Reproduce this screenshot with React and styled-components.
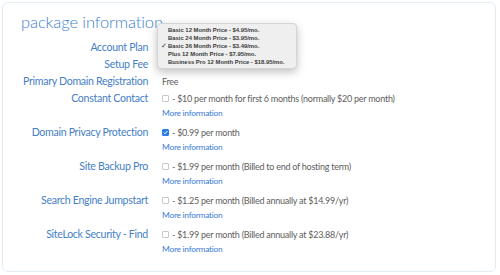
import React from "react";
import styled, { createGlobalStyle } from "styled-components";

const GlobalStyle = createGlobalStyle`
  body {
    margin: 0;
    background: #fff;
    font-family: "Lato", "Liberation Sans", sans-serif;
  }
`;

const Card = styled.div`
  margin: 2px 4px 0 2px;
  height: 270px;
  box-sizing: border-box;
  border: 1px solid #e3ebf4;
  border-radius: 6px;
  padding: 8px 0 0 19px;
`;

const Title = styled.h2`
  margin: 0 0 0 -1px;
  font-size: 16.5px;
  line-height: 22px;
  font-weight: 300;
  color: #3d7fd1;
  letter-spacing: -0.1px;
`;

const Form = styled.div`
  display: grid;
  grid-template-columns: 126px 1fr;
  column-gap: 14px;
  margin-top: 6px;
`;

const Label = styled.div`
  text-align: right;
  font-size: 10.6px;
  line-height: 17px;
  height: 17px;
  letter-spacing: -0.3px;
  color: #4580c6;
  white-space: nowrap;
`;

const Value = styled.div`
  position: relative;
  font-size: 9px;
  line-height: 17px;
  letter-spacing: -0.25px;
  color: #606060;
  white-space: nowrap;
  padding-bottom: ${(p) => (p.$addon ? "4px" : "0")};
`;

const Option = styled.div`
  display: flex;
  align-items: center;
  height: 17px;
  gap: 3px;
`;

const Box = styled.span`
  width: 7px;
  height: 7px;
  box-sizing: border-box;
  border: 1px solid ${(p) => (p.$checked ? "#2f7ee6" : "#c9c9c9")};
  border-radius: 1px;
  background: ${(p) => (p.$checked ? "#2f7ee6" : "#fff")};
  display: flex;
  align-items: center;
  justify-content: center;
`;

const MoreLink = styled.a`
  display: block;
  height: 13px;
  line-height: 13px;
  font-size: 8.4px;
  color: #3b7dd8;
  text-decoration: none;
`;

const Popup = styled.div`
  position: absolute;
  left: -5px;
  top: -16px;
  width: 138px;
  padding: 2px 0;
  background: #efefef;
  border: 1px solid #d4d4d4;
  border-radius: 4px;
  box-shadow: 0 3px 8px rgba(0, 0, 0, 0.25);
  font-family: "Liberation Sans", Arial, sans-serif;
  letter-spacing: 0;
  z-index: 2;
`;

const PopupItem = styled.div`
  position: relative;
  padding-left: 10px;
  font-size: 5.9px;
  line-height: 8px;
  font-weight: 700;
  color: #3a3a3a;
`;

const Tick = styled.span`
  position: absolute;
  left: 3px;
  top: 0;
  font-size: 7px;
  font-family: "DejaVu Sans", sans-serif;
`;

const plans = [
  "Basic 12 Month Price - $4.95/mo.",
  "Basic 24 Month Price - $3.95/mo.",
  "Basic 36 Month Price - $3.49/mo.",
  "Plus 12 Month Price - $7.95/mo.",
  "Business Pro 12 Month Price - $18.95/mo.",
];

const addons = [
  {
    name: "Constant Contact",
    text: "- $10 per month for first 6 months (normally $20 per month)",
  },
  { name: "Domain Privacy Protection", text: "- $0.99 per month", checked: true },
  { name: "Site Backup Pro", text: "- $1.99 per month (Billed to end of hosting term)" },
  {
    name: "Search Engine Jumpstart",
    text: "- $1.25 per month (Billed annually at $14.99/yr)",
  },
  {
    name: "SiteLock Security - Find",
    text: "- $1.99 per month (Billed annually at $23.88/yr)",
  },
];

function App() {
  return (
    <>
      <GlobalStyle />
      <Card>
        <Title>package information</Title>
        <Form>
          <Label>Account Plan</Label>
          <Value>
            <Popup>
              {plans.map((plan, i) => (
                <PopupItem key={plan}>
                  {i === 2 && <Tick>✓</Tick>}
                  {plan}
                </PopupItem>
              ))}
            </Popup>
          </Value>
          <Label>Setup Fee</Label>
          <Value />
          <Label>Primary Domain Registration</Label>
          <Value>Free</Value>
          {addons.map((item) => (
            <React.Fragment key={item.name}>
              <Label>{item.name}</Label>
              <Value $addon>
                <Option>
                  <Box $checked={item.checked}>
                    {item.checked && (
                      <svg width="5" height="5" viewBox="0 0 5 5">
                        <path d="M0.8 2.6 L2 3.8 L4.3 1" stroke="#fff" strokeWidth="1" fill="none" />
                      </svg>
                    )}
                  </Box>
                  <span>{item.text}</span>
                </Option>
                <MoreLink href="#">More information</MoreLink>
              </Value>
            </React.Fragment>
          ))}
        </Form>
      </Card>
    </>
  );
}

export default App;
